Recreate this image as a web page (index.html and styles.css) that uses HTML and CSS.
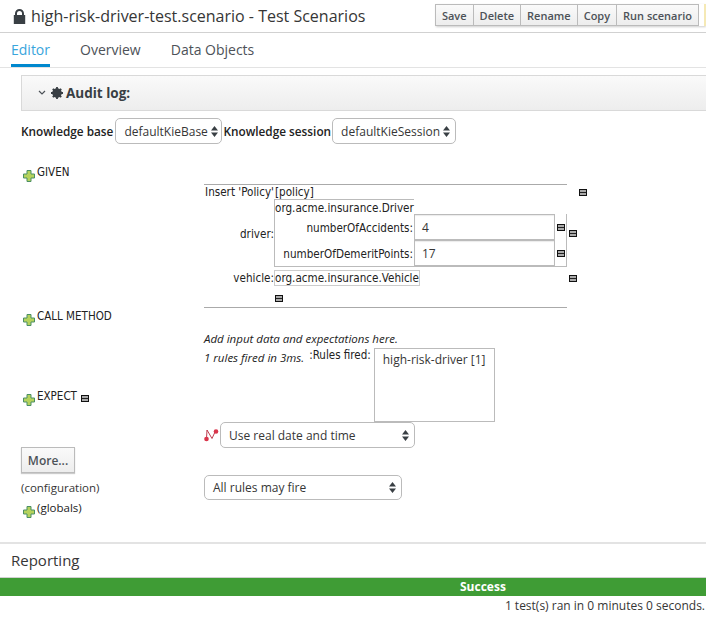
FILE: index.html
```html
<!DOCTYPE html>
<html lang="en">
<head>
  <meta charset="UTF-8">
  <meta name="viewport" content="width=device-width, initial-scale=1.0">
  <title>high-risk-driver-test.scenario - Test Scenarios</title>
  <link rel="stylesheet" href="styles.css">
</head>
<body>
  <header class="title-bar">
    <svg class="lock" width="13" height="15" viewBox="0 0 13 15"><path d="M2 6V4.5a4.5 4.5 0 0 1 9 0V6h1.2v9H.8V6zm2 0h5V4.500a2.500 2.500 0 0 0-5 0z" fill="#393f44" fill-rule="evenodd"/></svg>
    <h1>high-risk-driver-test.scenario - Test Scenarios</h1>
    <div class="toolbar">
      <button>Save</button>
      <button>Delete</button>
      <button>Rename</button>
      <button>Copy</button>
      <button>Run scenario</button>
      <span class="toolbar-more"></span>
    </div>
  </header>

  <nav class="tabs">
    <a class="tab active">Editor</a>
    <a class="tab">Overview</a>
    <a class="tab">Data Objects</a>
  </nav>

  <div class="audit">
    <svg width="8" height="6" viewBox="0 0 8 6"><path d="M1 1l3 3 3-3" fill="none" stroke="#4d5258" stroke-width="1.200"/></svg>
    <svg class="gear" width="12" height="12" viewBox="0 0 12 12"><circle cx="6" cy="6" r="4.800" fill="#393f44"/><path d="M6 0v12M0 6h12M1.800 1.800l8.400 8.400M10.200 1.800l-8.400 8.400" stroke="#393f44" stroke-width="1.800"/></svg>
    <span>Audit log:</span>
  </div>

  <div class="knowledge">
    <label>Knowledge base</label>
    <div class="select kbase">defaultKieBase
      <svg class="caret" width="7" height="11" viewBox="0 0 7 11"><path d="M3.500 0L7 4.500H0zM3.500 11L0 6.500h7z" fill="#393f44"/></svg>
    </div>
    <label>Knowledge session</label>
    <div class="select ksession">defaultKieSession
      <svg class="caret" width="7" height="11" viewBox="0 0 7 11"><path d="M3.500 0L7 4.500H0zM3.500 11L0 6.500h7z" fill="#393f44"/></svg>
    </div>
  </div>

  <main class="scenario">
    <!-- left column: section headings -->
    <div class="side">
      <div class="section given">
        <svg class="plus" width="12" height="12" viewBox="0 0 12 12"><path d="M4 .5h4v3.500h3.500v4H8v3.500H4V8H.5V4H4z" fill="#b5d25c" stroke="#4b8f63"/></svg>
        <span>GIVEN</span>
      </div>
      <div class="section call">
        <svg class="plus" width="12" height="12" viewBox="0 0 12 12"><path d="M4 .5h4v3.500h3.500v4H8v3.500H4V8H.5V4H4z" fill="#b5d25c" stroke="#4b8f63"/></svg>
        <span>CALL METHOD</span>
      </div>
      <div class="section expect">
        <svg class="plus" width="12" height="12" viewBox="0 0 12 12"><path d="M4 .5h4v3.500h3.500v4H8v3.500H4V8H.5V4H4z" fill="#b5d25c" stroke="#4b8f63"/></svg>
        <span>EXPECT</span>
        <span class="minus"></span>
      </div>
      <button class="more">More...</button>
      <div class="config">(configuration)</div>
      <div class="section globals">
        <svg class="plus" width="12" height="12" viewBox="0 0 12 12"><path d="M4 .5h4v3.500h3.500v4H8v3.500H4V8H.5V4H4z" fill="#b5d25c" stroke="#4b8f63"/></svg>
        <span class="open">(globals)</span>
      </div>
    </div>

    <!-- right column: facts and results -->
    <div class="content">
      <div class="facts">
        <div class="rule"></div>
        <div class="fact-label">Insert 'Policy'</div>
        <div class="fact-value">[policy]</div>
        <div class="fact-action first"><span class="minus"></span></div>

        <div class="fact-label driver">driver:</div>
        <div class="object">
          <div class="object-name">org.acme.insurance.Driver</div>
          <div class="fields">
            <label>numberOfAccidents:</label>
            <div class="input">4</div>
            <span class="minus"></span>
            <label>numberOfDemeritPoints:</label>
            <div class="input">17</div>
            <span class="minus"></span>
          </div>
        </div>
        <div class="fact-action"><span class="minus"></span></div>

        <div class="fact-label vehicle-label">vehicle:</div>
        <div class="fact-value vehicle-value"><span class="vehicle">org.acme.insurance.Vehicle</span></div>
        <div class="fact-action vehicle-action"><span class="minus"></span></div>

        <div class="fact-remove"><span class="minus"></span></div>
        <div class="rule"></div>
      </div>

      <p class="hint">Add input data and expectations here.</p>
      <div class="results">
        <em>1 rules fired in 3ms.</em>
        <span class="rules-label">:Rules fired:</span>
        <div class="rules-list">high-risk-driver [1]</div>
      </div>

      <div class="date-row">
        <svg width="15" height="13" viewBox="0 0 15 13"><path d="M2.500 9.500L3 1l5 8.500L11 3" fill="none" stroke="#b5283c" stroke-width=".9"/><circle cx="2.500" cy="10" r="2.300" fill="#d9344a"/><circle cx="12" cy="2.500" r="2.300" fill="#d9344a"/></svg>
        <div class="select date">Use real date and time
          <svg class="caret" width="7" height="11" viewBox="0 0 7 11"><path d="M3.500 0L7 4.500H0zM3.500 11L0 6.500h7z" fill="#393f44"/></svg>
        </div>
      </div>
      <div class="select fire">All rules may fire
        <svg class="caret" width="7" height="11" viewBox="0 0 7 11"><path d="M3.500 0L7 4.500H0zM3.500 11L0 6.500h7z" fill="#393f44"/></svg>
      </div>
    </div>
  </main>

  <footer class="reporting">
    <h2>Reporting</h2>
    <div class="success">Success</div>
    <div class="summary">1 test(s) ran in 0 minutes 0 seconds.</div>
  </footer>
</body>
</html>
```

FILE: styles.css
```css
html, body {
  height: 622px;
  overflow: hidden;
}
body {
  margin: 0;
  background: #fff;
  font-family: "Open Sans", sans-serif;
  font-size: 12px;
  color: #363636;
}
.title-bar {
  display: flex;
  align-items: center;
  height: 32px;
  border-bottom: 1px solid #d1d1d1;
  padding-left: 13px;
}
.lock {
  margin-right: 5px;
}
.title-bar h1 {
  margin: 0;
  font-size: 16px;
  font-weight: 400;
  color: #363636;
  white-space: nowrap;
}
.toolbar {
  display: flex;
  align-self: flex-start;
  height: 22px;
  margin: 4px 0 0 auto;
  box-shadow: 0 1px 2px rgba(0, 0, 0, 0.2);
}
.toolbar button {
  height: 22px;
  margin: 0 0 0 -1px;
  padding: 0 6px;
  border: 1px solid #bbb;
  background: linear-gradient(#fafafa, #ededed);
  font-family: "Open Sans", sans-serif;
  font-size: 11px;
  font-weight: 600;
  color: #4d5258;
  white-space: nowrap;
}
.toolbar-more {
  width: 2px;
  margin-left: 5px;
  background: #f5e9b5;
}
.tabs {
  display: flex;
  gap: 30px;
  height: 34px;
  padding-left: 11px;
  border-bottom: 1px solid #e3e3e3;
}
.tab {
  height: 31px;
  line-height: 33px;
  font-size: 14px;
  color: #4d5258;
}
.tab.active {
  color: #39a5dc;
  border-bottom: 3px solid #0088ce;
}
.audit {
  display: flex;
  align-items: center;
  height: 34px;
  margin: 7px 0 0 21px;
  padding-left: 16px;
  border: 1px solid #d9d9d9;
  border-right: none;
  background: linear-gradient(#fafafa, #ededed);
  font-size: 13.500px;
  font-weight: 700;
  color: #393f44;
}
.audit .gear {
  margin: 0 3px 0 5px;
}
.knowledge {
  display: flex;
  align-items: center;
  margin: 7px 0 0 21px;
}
.knowledge label {
  font-weight: 600;
  font-size: 11.800px;
  color: #222;
}
.select {
  display: flex;
  align-items: center;
  justify-content: space-between;
  box-sizing: border-box;
  height: 26px;
  padding: 0 5px 0 8px;
  border: 1px solid #bbb;
  border-radius: 5px;
  background: #fff;
  font-size: 12px;
  color: #363636;
}
.kbase {
  width: 107px;
  margin: 0 1px 0 2px;
  padding-right: 3px;
}
.ksession {
  width: 124px;
  margin-left: 1px;
}
.scenario {
  display: grid;
  grid-template-columns: 183px 1fr;
  margin: 0 0 0 21px;
  height: 398px;
}
.section {
  display: flex;
  align-items: flex-start;
  font-family: "DejaVu Sans Condensed", "DejaVu Sans", sans-serif;
  font-stretch: condensed;
  font-size: 11.500px;
  line-height: 14px;
  color: #222;
}
.section .plus {
  margin: 5px 2px 0 2px;
}
.section.given {
  margin-top: 21px;
}
.section.call {
  margin-top: 127px;
}
.section.expect {
  margin-top: 63px;
}
.section.expect .minus {
  margin: 6px 0 0 4px;
}
.section.globals {
  margin-top: 5px;
}
.section .open {
  font-family: "Open Sans", sans-serif;
  font-stretch: normal;
  font-size: 11.500px;
}
.minus {
  display: inline-block;
  box-sizing: border-box;
  width: 8px;
  height: 7px;
  border: 1px solid #111;
  background: linear-gradient(#aaa 0 2px, #222 2px 3px, #aaa 3px);
}
.more {
  display: block;
  width: 54px;
  height: 26px;
  margin-top: 41px;
  padding: 0;
  border: 1px solid #bbb;
  background: linear-gradient(#fafafa, #ededed);
  box-shadow: 0 1px 1px rgba(0, 0, 0, 0.2);
  font-family: "Open Sans", sans-serif;
  font-size: 12px;
  font-weight: 600;
  color: #4d5258;
}
.config {
  margin-top: 7px;
  font-size: 11.500px;
  line-height: 16px;
}
.facts {
  display: grid;
  grid-template-columns: 70px 293px 30px;
  margin-top: 40px;
  font-family: "DejaVu Sans Condensed", "DejaVu Sans", sans-serif;
  font-stretch: condensed;
  font-size: 11.600px;
  color: #222;
}
.rule {
  grid-column: 1 / 3;
  height: 1px;
  background: #aaa;
}
.fact-label {
  grid-column: 1;
  text-align: right;
  line-height: 14px;
  white-space: nowrap;
}
.fact-label.driver {
  align-self: center;
  padding-top: 2px;
}
.fact-value {
  height: 14px;
  padding-left: 1px;
  line-height: 14px;
  white-space: nowrap;
}
.fact-action {
  align-self: center;
  padding-left: 2px;
  line-height: 7px;
}
.fact-action.first {
  padding-left: 12px;
}
.object {
  box-sizing: border-box;
  border-left: 1px solid #bbb;
  border-bottom: 1px solid #bbb;
}
.object-name {
  box-sizing: border-box;
  width: 139px;
  height: 15px;
  border-top: 1px solid #bbb;
  line-height: 17px;
}
.fields {
  display: grid;
  grid-template-columns: 139px 141px 1fr;
  grid-auto-rows: 26px;
  align-items: center;
  border-right: 1px solid #bbb;
}
.fields label {
  text-align: right;
  padding: 1px 1px 0 0;
  white-space: nowrap;
}
.fields .minus {
  margin-left: 2px;
}
.input {
  box-sizing: border-box;
  height: 26px;
  padding-left: 7px;
  border: 1px solid #bbb;
  box-shadow: inset 0 1px 1px rgba(0, 0, 0, 0.08);
  font-family: "Open Sans", sans-serif;
  font-stretch: normal;
  font-size: 12px;
  line-height: 26px;
  color: #363636;
}
.vehicle-label {
  align-self: end;
  line-height: 16px;
}
.vehicle-value {
  height: 19px;
  padding: 3px 0 0;
  box-sizing: border-box;
}
.vehicle {
  display: inline-block;
  box-sizing: border-box;
  height: 16px;
  line-height: 14px;
  border: 1px solid #ccc;
}
.vehicle-action {
  padding-top: 3px;
}
.fact-remove {
  grid-column: 2;
  height: 21px;
  padding: 9px 0 0 1px;
  box-sizing: border-box;
  line-height: 7px;
}
.hint {
  margin: 23px 0 0;
  font-size: 11.500px;
  font-style: italic;
  line-height: 16px;
  color: #222;
}
.results {
  display: flex;
  align-items: flex-start;
  margin-top: 1px;
}
.results em {
  font-size: 11.500px;
  line-height: 16px;
  margin-top: 2px;
  color: #222;
}
.rules-label {
  margin-left: 5px;
  font-family: "DejaVu Sans Condensed", "DejaVu Sans", sans-serif;
  font-stretch: condensed;
  font-size: 11.500px;
  line-height: 14px;
  color: #222;
}
.rules-list {
  box-sizing: border-box;
  width: 121px;
  height: 74px;
  margin-left: 3px;
  padding: 2px 8px;
  border: 1px solid #bbb;
  font-size: 12px;
  line-height: 17px;
  white-space: nowrap;
  color: #363636;
}
.date-row {
  display: flex;
  align-items: center;
  height: 26px;
}
.date {
  width: 195px;
  margin-left: 1px;
}
.fire {
  width: 198px;
  height: 25px;
  margin-top: 27px;
}
.reporting {
  border-top: 2px solid #e3e3e3;
}
.reporting h2 {
  height: 33px;
  margin: 0;
  padding-left: 11px;
  border-bottom: 1px solid #d1d1d1;
  font-size: 15px;
  font-weight: 400;
  line-height: 33px;
  color: #363636;
}
.success {
  height: 18px;
  padding-left: 460px;
  background: #3f9c35;
  font-size: 12px;
  font-weight: 700;
  line-height: 18px;
  color: #fff;
}
.summary {
  padding-right: 1px;
  text-align: right;
  font-size: 12px;
  line-height: 20px;
  color: #363636;
}
```
